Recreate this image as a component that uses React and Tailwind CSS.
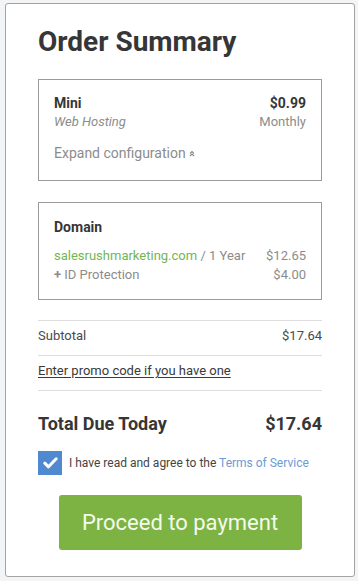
// Order summary card: hosting plan box, domain box, totals and checkout button.

const font = { fontFamily: "Roboto, 'Liberation Sans', sans-serif" };

function Box({ children, className = "" }) {
  return <div className={`border border-[#9a9a9a] px-[15px] ${className}`}>{children}</div>;
}

function DoubleUp() {
  return (
    <svg width="6" height="7" viewBox="0 0 6 7" className="inline-block ml-[3px] mb-[2px]">
      <polyline points="1,3.5 3,1.5 5,3.5" fill="none" stroke="#8a8a8a" strokeWidth="1.1" />
      <polyline points="1,6 3,4 5,6" fill="none" stroke="#8a8a8a" strokeWidth="1.1" />
    </svg>
  );
}

export default function App() {
  return (
    <div className="min-h-[581px] bg-[#f3f4f6] pt-[3px] pl-[5px] pr-[3px] pb-[5px]" style={font}>
      <div className="bg-white border border-[#a3a3a3] rounded-[3px] pt-[21px] pb-[26px] pl-[32px] pr-[32px]">
        <h1 className="text-[28px] leading-[34px] font-bold text-[#363636]">Order Summary</h1>

        <Box className="mt-[20px] pt-[13px] pb-[17px]">
          <div className="flex justify-between">
            <div>
              <div className="text-[14px] leading-[20px] font-bold text-[#363636]">Mini</div>
              <div className="text-[13px] leading-[18px] italic text-[#8c8c8c]">Web Hosting</div>
            </div>
            <div className="text-right">
              <div className="text-[14px] leading-[20px] font-bold text-[#363636]">$0.99</div>
              <div className="text-[13px] leading-[18px] text-[#8c8c8c]">Monthly</div>
            </div>
          </div>
          <div className="mt-[12px] text-[14px] leading-[20px] text-[#8c8c8c]">
            Expand configuration
            <DoubleUp />
          </div>
        </Box>

        <Box className="mt-[21px] pt-[14px] pb-[15px]">
          <div className="text-[14px] leading-[20px] font-bold text-[#363636]">Domain</div>
          <div className="mt-[9px] text-[13px] leading-[19px] text-[#8c8c8c]">
            <div className="flex justify-between">
              <span>
                <span className="text-[#74b556]">salesrushmarketing.com</span> / 1 Year
              </span>
              <span>$12.65</span>
            </div>
            <div className="flex justify-between">
              <span>
                <span className="font-bold">+</span> ID Protection
              </span>
              <span>$4.00</span>
            </div>
          </div>
        </Box>

        <div className="mt-[20px] border-t border-[#dedede] pt-[5px] pb-[9px] flex justify-between text-[13px] leading-[20px] text-[#4a4a4a]">
          <span>Subtotal</span>
          <span>$17.64</span>
        </div>
        <div className="border-t border-[#dedede] pt-[5px] pb-[9px] text-[13px] leading-[20px] text-[#3a3a3a]">
          <a href="#" className="underline underline-offset-2">Enter promo code if you have one</a>
        </div>

        <div className="border-t border-[#dedede] pt-[21px] flex justify-between text-[18px] leading-[24px] font-bold text-[#363636]">
          <span>Total Due Today</span>
          <span>$17.64</span>
        </div>

        <label className="mt-[15px] flex items-center gap-[7px] text-[12px] text-[#444]">
          <span className="w-[24px] h-[24px] bg-[#4f8ad0] flex items-center justify-center shrink-0">
            <svg width="15" height="12" viewBox="0 0 15 12">
              <polyline points="1.8,6.2 5.5,9.8 13.2,1.8" fill="none" stroke="white" strokeWidth="3" strokeLinecap="round" strokeLinejoin="round" />
            </svg>
          </span>
          <span>
            I have read and agree to the <a href="#" className="text-[#6b9bd6]">Terms of Service</a>
          </span>
        </label>

        <div className="mt-[20px] flex justify-center">
          <button className="w-[243px] h-[55px] rounded-[3px] bg-[#7cb342] text-[#f4fbee] text-[22px]">
            Proceed to payment
          </button>
        </div>
      </div>
    </div>
  );
}
